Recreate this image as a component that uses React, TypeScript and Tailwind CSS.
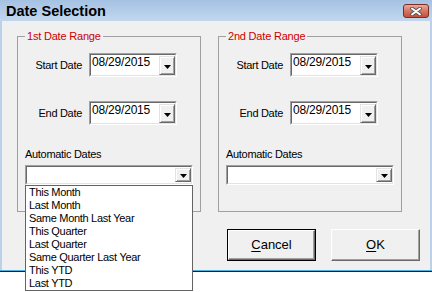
const font = "font-['Liberation_Sans',Arial,sans-serif]";

const autoOptions = [
  "This Month",
  "Last Month",
  "Same Month Last Year",
  "This Quarter",
  "Last Quarter",
  "Same Quarter Last Year",
  "This YTD",
  "Last YTD",
];

function DropButton() {
  return (
    <div className="flex h-full w-[16px] shrink-0 items-center justify-center border border-t-[#e3e3e3] border-l-[#e3e3e3] border-b-[#696969] border-r-[#696969] bg-[#f0f0f0] shadow-[inset_1px_1px_0_#fff,inset_-1px_-1px_0_#a0a0a0]">
      <svg width="7" height="4" viewBox="0 0 7 4" className="mt-[2px]">
        <path d="M0 0h7L3.5 4z" fill="#000" />
      </svg>
    </div>
  );
}

function Sunken({ className, children }: { className: string; children: React.ReactNode }) {
  return (
    <div className={`border border-t-[#a0a0a0] border-l-[#a0a0a0] border-b-white border-r-white ${className}`}>
      <div className="flex h-full border border-t-[#696969] border-l-[#696969] border-b-[#e3e3e3] border-r-[#e3e3e3] bg-white">
        {children}
      </div>
    </div>
  );
}

function DateRow({ label }: { label: string }) {
  return (
    <div className="flex items-center">
      <span className="w-[64px] text-right text-[11px] tracking-[-0.3px]">{label}</span>
      <Sunken className="ml-[7px] h-[24px] w-[88px]">
        <span className="flex-1 pl-[1px] text-[12px] leading-[14px] tracking-[-0.2px]">08/29/2015</span>
        <div className="pt-[1px]">
          <DropButton />
        </div>
      </Sunken>
    </div>
  );
}

function RangeGroup({ title, open }: { title: string; open?: boolean }) {
  return (
    <fieldset className="h-[182px] w-[184px] border border-[#a0a0a0]">
      <legend className="ml-[7px] px-[2px] text-[11px] leading-[13px] tracking-[-0.2px] text-[#cc0000]">
        {title}
      </legend>
      <div className="flex flex-col pt-[10px]">
        <DateRow label="Start Date" />
        <div className="mt-[24px]">
          <DateRow label="End Date" />
        </div>
        <div className="mt-[23px] pl-[7px] text-[11px] leading-[13px] tracking-[-0.3px]">Automatic Dates</div>
        <div className="relative ml-[7px] mt-[4px] w-[168px]">
          <Sunken className="h-[20px] w-[168px]">
            <span className="flex-1" />
            <div className="py-[1px]">
              <DropButton />
            </div>
          </Sunken>
          {open && (
            <ul className="absolute left-0 top-full z-10 w-[168px] border border-[#646464] bg-white">
              {autoOptions.map((o) => (
                <li key={o} className="pl-[3px] text-[11px] leading-[13px] tracking-[-0.3px]">
                  {o}
                </li>
              ))}
            </ul>
          )}
        </div>
      </div>
    </fieldset>
  );
}

export default function App() {
  return (
    <div className={`relative h-[292px] w-[432px] overflow-hidden bg-white text-black ${font}`}>
      <div className="flex h-[272px] w-[432px] flex-col bg-[#b9d1ea]">
        <div className="flex h-[21px] items-start justify-between bg-gradient-to-b from-[#a5c2e3] to-[#c2d7ee] pl-[6px] pr-[3px]">
          <span className="text-[14.5px] font-bold leading-[22px]">Date Selection</span>
          <div className="mt-[4px] flex h-[14px] w-[26px] items-center justify-center rounded-[3px] border border-[#7d2e22] bg-gradient-to-b from-[#e9a99b] via-[#d67565] to-[#c4503c]">
            <svg width="12" height="9" viewBox="0 0 12 9">
              <path d="M2 1.5l8 6M10 1.5l-8 6" stroke="#5a4a48" strokeWidth="3.6" strokeLinecap="round" />
              <path d="M2 1.5l8 6M10 1.5l-8 6" stroke="#fff" strokeWidth="2" strokeLinecap="round" />
            </svg>
          </div>
        </div>
        <div className="mx-[2px] flex flex-1 flex-col bg-[#f0f0f0] pl-[15px] pt-[9px]">
          <div className="flex gap-[17px]">
            <RangeGroup title="1st Date Range" open />
            <RangeGroup title="2nd Date Range" />
          </div>
          <div className="mt-[17px] flex justify-end gap-[15px] pr-[10px] text-[13px]">
            <div className="h-[32px] w-[89px] border border-black">
              <div className="flex h-full items-center justify-center border border-t-white border-l-white border-b-[#696969] border-r-[#696969] shadow-[inset_-1px_-1px_0_#a0a0a0]">
                <span>
                  <span className="underline underline-offset-2">C</span>ancel
                </span>
              </div>
            </div>
            <div className="flex h-[32px] w-[89px] items-center justify-center border border-t-white border-l-white border-b-[#696969] border-r-[#696969] shadow-[inset_-1px_-1px_0_#a0a0a0]">
              <span>
                <span className="underline underline-offset-2">O</span>K
              </span>
            </div>
          </div>
        </div>
        <div className="h-[1px] bg-[#4cb2de]" />
        <div className="h-[1px] bg-[#1c1c1c]" />
      </div>
    </div>
  );
}
